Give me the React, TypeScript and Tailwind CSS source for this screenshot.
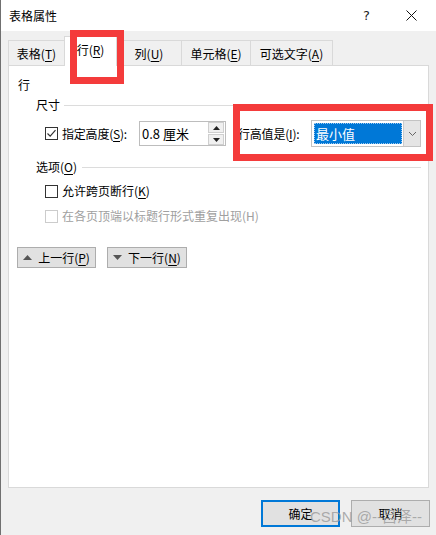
import React from "react";

const font = "font-['Microsoft_YaHei','Noto_Sans_CJK_SC','Noto_Sans',sans-serif]";

function Check({ checked, disabled }: { checked?: boolean; disabled?: boolean }) {
    return (
        <div
            className={`w-[13px] h-[13px] shrink-0 border bg-white flex items-center justify-center ${
                disabled ? "border-[#cccccc]" : "border-[#333333]"
            }`}
        >
            {checked && (
                <svg width="11" height="11" viewBox="0 0 11 11">
                    <path d="M1.5 5.5 L4.2 8.2 L9.5 2.2" fill="none" stroke="#333" strokeWidth="1.2" />
                </svg>
            )}
        </div>
    );
}

function Underline({ c }: { c: string }) {
    return <span className="underline underline-offset-2">{c}</span>;
}

export default function App() {
    return (
        <div className={`relative w-[436px] h-[535px] bg-[#f0f0f0] border-l border-[#707070] flex flex-col text-[12px] leading-[16px] text-black ${font}`}>
            {/* title bar */}
            <div className="h-[31px] bg-white flex items-center pl-[8px] pr-[19px] shrink-0">
                <span className="text-[12px]">表格属性</span>
                <span className="ml-auto text-[13px] font-['DejaVu_Sans',sans-serif] text-[#222]">?</span>
                <svg className="ml-[36px]" width="11" height="11" viewBox="0 0 11 11">
                    <path d="M0.5 0.5 L10.5 10.5 M10.5 0.5 L0.5 10.5" stroke="#111" strokeWidth="1" />
                </svg>
            </div>

            {/* tabs */}
            <div className="mt-[5px] ml-[7px] h-[29px] flex items-end whitespace-nowrap">
                <div className="w-[56px] h-[25px] border-l border-t border-[#d9d9d9] flex items-center justify-center pt-[1px]">
                    表格(<Underline c="T" />)
                </div>
                <div className="relative z-10 w-[53px] h-[30px] -mb-px bg-white border-l border-t border-r border-[#d9d9d9] flex items-center justify-center pb-[3px]">
                    行(<Underline c="R" />)
                </div>
                <div className="w-[64px] h-[25px] border-t border-[#d9d9d9] flex items-center justify-center pt-[1px]">
                    列(<Underline c="U" />)
                </div>
                <div className="w-[69px] h-[25px] border-l border-t border-[#d9d9d9] flex items-center justify-center pt-[1px]">
                    单元格(<Underline c="E" />)
                </div>
                <div className="w-[83px] h-[25px] border-l border-t border-r border-[#d9d9d9] flex items-center justify-center pt-[1px]">
                    可选文字(<Underline c="A" />)
                </div>
            </div>

            {/* panel */}
            <div className="ml-[7px] w-[421px] h-[423px] bg-white border border-[#d9d9d9] pl-[9px] pr-[7px] pt-[11px] flex flex-col whitespace-nowrap">
                <div>行</div>

                <div className="mt-[4px] ml-[18px] flex items-center gap-[4px]">
                    <span>尺寸</span>
                    <div className="flex-1 h-px bg-[#dcdcdc]" />
                </div>

                <div className="mt-[7px] ml-[27px] h-[27px] flex items-center">
                    <Check checked />
                    <span className="ml-[4px] shrink-0 tracking-[-0.2px]">指定高度(<Underline c="S" />):</span>
                    <div className="ml-[12px] shrink-0 w-[87px] h-[25px] border border-[#bdbdbd] bg-white flex items-center">
                        <span className="pl-[2px] text-[13px]">0.8 厘米</span>
                        <div className="ml-auto mr-[1px] w-[16px] h-[23px] flex flex-col gap-px">
                            <div className="flex-1 bg-[#f0f0f0] border border-[#cfcfcf] flex items-center justify-center">
                                <svg width="7" height="4" viewBox="0 0 7 4"><path d="M0 4 L3.5 0 L7 4 Z" fill="#222" /></svg>
                            </div>
                            <div className="flex-1 bg-[#f0f0f0] border border-[#cfcfcf] flex items-center justify-center">
                                <svg width="7" height="4" viewBox="0 0 7 4"><path d="M0 0 L3.5 4 L7 0 Z" fill="#222" /></svg>
                            </div>
                        </div>
                    </div>
                    <span className="ml-[12px] shrink-0 tracking-[-0.2px]">行高值是(<Underline c="I" />):</span>
                    <div className="ml-auto shrink-0 w-[110px] h-[27px] border border-[#c3c3c3] bg-white flex items-stretch">
                        <div className="flex-1 p-[2px] pr-[1px] flex">
                            <div className="flex-1 bg-[#0078d7] border border-dotted border-[#9ec9ef] text-white flex items-center pl-[1px] text-[13px]">
                                最小值
                            </div>
                        </div>
                        <div className="w-[17px] bg-[#e5e5e5] border-l border-[#cccccc] flex items-center justify-center">
                            <svg width="9" height="6" viewBox="0 0 9 6">
                                <path d="M1 1 L4.5 4.5 L8 1" fill="none" stroke="#666" strokeWidth="1" />
                            </svg>
                        </div>
                    </div>
                </div>

                <div className="mt-[12px] ml-[18px] flex items-center gap-[5px]">
                    <span>选项(<Underline c="O" />)</span>
                    <div className="flex-1 h-px bg-[#dcdcdc]" />
                </div>

                <div className="mt-[8px] ml-[27px] flex items-center">
                    <Check />
                    <span className="ml-[4px]">允许跨页断行(<Underline c="K" />)</span>
                </div>

                <div className="mt-[9px] ml-[27px] flex items-center text-[#a0a0a0]">
                    <Check disabled />
                    <span className="ml-[4px]">在各页顶端以标题行形式重复出现(H)</span>
                </div>

                <div className="mt-[23px] -ml-[1px] flex gap-[11px]">
                    <div className="w-[79px] h-[21px] bg-[#e1e1e1] border border-[#adadad] flex items-center justify-center gap-[6px]">
                        <svg width="9" height="5" viewBox="0 0 9 5"><path d="M0 5 L4.5 0 L9 5 Z" fill="#555" /></svg>
                        <span>上一行(<Underline c="P" />)</span>
                    </div>
                    <div className="w-[80px] h-[21px] bg-[#e1e1e1] border border-[#adadad] flex items-center justify-center gap-[6px]">
                        <svg width="9" height="5" viewBox="0 0 9 5"><path d="M0 0 L4.5 5 L9 0 Z" fill="#555" /></svg>
                        <span>下一行(<Underline c="N" />)</span>
                    </div>
                </div>
            </div>

            {/* footer buttons */}
            <div className="mt-[12px] flex justify-end gap-[11px] pr-[6px]">
                <div className="w-[79px] h-[27px] bg-[#e1e1e1] border-2 border-[#0078d7] flex items-center justify-center">
                    确定
                </div>
                <div className="w-[79px] h-[27px] bg-[#e1e1e1] border border-[#adadad] flex items-center justify-center">
                    取消
                </div>
            </div>

            {/* annotations */}
            <div className="absolute left-[69px] top-[30px] w-[54px] h-[54px] border-[7px] border-[#f43b3b] z-20" />
            <div className="absolute left-[232px] top-[104px] w-[200px] h-[57px] border-[7px] border-[#f43b3b] z-20" />
            <div className="absolute left-[309px] top-[507px] text-[15px] leading-[20px] text-[#9a9a9a]/80 z-30 font-['Liberation_Sans','Noto_Sans_CJK_SC',sans-serif]">
                CSDN @--吕泽--
            </div>
        </div>
    );
}
